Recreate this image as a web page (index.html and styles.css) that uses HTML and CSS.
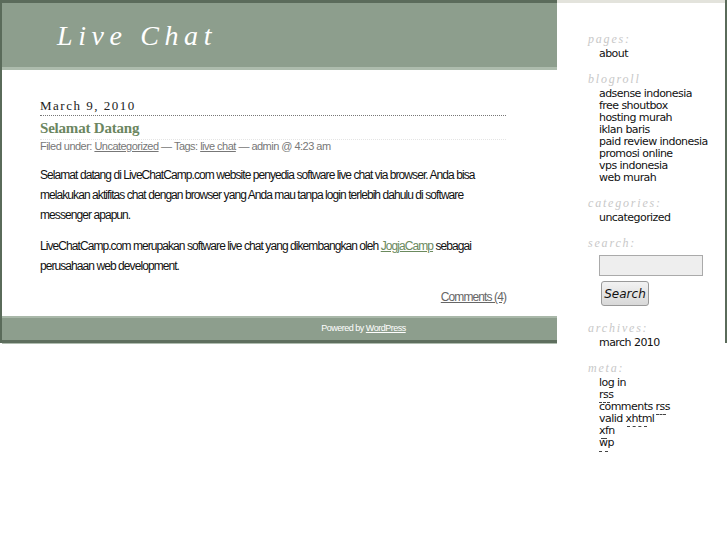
FILE: index.html
```html
<!DOCTYPE html>
<html lang="id">
<head>
<meta charset="utf-8">
<title>Live Chat</title>
<link rel="stylesheet" href="styles.css">
</head>
<body>
<div class="wrap">
  <div class="header"><h1 class="site-title">Live Chat</h1></div>
  <div class="content">
    <h2 class="date">March 9, 2010</h2>
    <h3 class="post-title">Selamat Datang</h3>
    <div class="meta">Filed under: <a href="#">Uncategorized</a> — Tags: <a href="#">live chat</a> — admin @ 4:23 am</div>
    <p class="text">Selamat datang di LiveChatCamp.com website penyedia software live chat via browser. Anda bisa melakukan aktifitas chat dengan browser yang Anda mau tanpa login terlebih dahulu di software messenger apapun.</p>
    <p class="text">LiveChatCamp.com merupakan software live chat yang dikembangkan oleh <a class="green" href="#">JogjaCamp</a> sebagai perusahaan web development.</p>
    <div class="feedback"><a href="#">Comments (4)</a></div>
  </div>
  <div class="footer">Powered by <a href="#">WordPress</a></div>

  <div class="sidebar">
    <h4 class="side-h">pages:</h4>
    <ul class="side-list"><li>about</li></ul>
    <h4 class="side-h">blogroll</h4>
    <ul class="side-list">
      <li>adsense indonesia</li>
      <li>free shoutbox</li>
      <li>hosting murah</li>
      <li>iklan baris</li>
      <li>paid review indonesia</li>
      <li>promosi online</li>
      <li>vps indonesia</li>
      <li>web murah</li>
    </ul>
    <h4 class="side-h">categories:</h4>
    <ul class="side-list"><li>uncategorized</li></ul>
    <h4 class="side-h">search:</h4>
    <form class="search">
      <input class="search-input" type="text">
      <button class="search-btn" type="button">Search</button>
    </form>
    <h4 class="side-h">archives:</h4>
    <ul class="side-list"><li>march 2010</li></ul>
    <h4 class="side-h">meta:</h4>
    <ul class="side-list">
      <li>log in</li>
      <li>rss</li>
      <li><span class="dash d0"></span>comments rss</li>
      <li>valid xhtml<span class="dash d1"></span></li>
      <li>xfn<span class="dash d2"></span></li>
      <li><span class="dash d3"></span>wp</li>
      <li class="cut"><span class="dash d4"></span></li>
    </ul>
  </div>
</div>
</body>
</html>
```

FILE: styles.css
```css
* { box-sizing: border-box; }
html, body { min-height: 545px; }
body { margin: 0; background: #fff; font-family: "Liberation Sans", Arial, sans-serif; color: #111; }
.wrap {
  position: relative;
  width: 727px;
  border-left: 2px solid #5a6b5a;
  border-right: 2px solid #5a6b5a;
}
.header {
  height: 70px;
  background: #8d9e8d;
  border-top: 3px solid #5b6b5b;
  border-bottom: 3px solid #adbcad;
  padding: 16px 0 0 55px;
}
.site-title {
  margin: 0;
  font-family: "Liberation Serif", "Times New Roman", serif;
  font-style: italic;
  font-weight: normal;
  font-size: 28px;
  line-height: 34px;
  letter-spacing: 5.6px;
  color: #fff;
}
.content { padding: 28px 219px 12px 38px; }
.date {
  margin: 0;
  font-family: "Liberation Serif", serif;
  font-weight: normal;
  font-size: 13px;
  line-height: 16px;
  letter-spacing: 1.5px;
  color: #222;
  padding-bottom: 1px;
  border-bottom: 1px dotted #777;
}
.post-title {
  margin: 3px 0 0;
  font-family: "Liberation Serif", serif;
  font-weight: bold;
  font-size: 15px;
  line-height: 18px;
  letter-spacing: -0.2px;
  color: #6b8660;
  padding-bottom: 2px;
  border-bottom: 1px dotted #e4e4e4;
}
.meta {
  font-size: 11px;
  line-height: 13px;
  letter-spacing: -0.52px;
  color: #777;
}
.meta a { color: #777; }
.text {
  margin: 12px 0 0;
  font-size: 12px;
  line-height: 20px;
  letter-spacing: -0.93px;
  color: #111;
}
.text + .text { margin-top: 11px; }
.green { color: #6b8a5e; }
.feedback {
  margin-top: 14px;
  text-align: right;
  font-size: 12px;
  line-height: 14px;
  letter-spacing: -0.9px;
}
.feedback a { color: #666; }
.footer {
  height: 27px;
  background: #8d9e8d;
  border-top: 2px solid #a9b8a9;
  border-bottom: 3px solid #5e6e5e;
  box-shadow: 0 1px 0 #b0bdb0;
  text-align: center;
  font-size: 9px;
  line-height: 20px;
  letter-spacing: -0.5px;
  color: #fff;
}
.footer a { color: #fff; }
.sidebar {
  position: absolute;
  top: 0;
  right: 0;
  width: 168px;
  height: 455px;
  overflow: hidden;
  background: #fff;
  border-top: 3px solid #e3e3dc;
  padding: 29px 0 0 31px;
}
.side-h {
  margin: 0;
  font-family: "Liberation Serif", serif;
  font-style: italic;
  font-weight: normal;
  font-size: 12px;
  line-height: 14px;
  letter-spacing: 1.8px;
  color: #c8c8c8;
}
.side-list {
  list-style: none;
  margin: 2px 0 12px;
  padding: 0 0 0 11px;
  font-family: "DejaVu Sans", sans-serif;
  font-size: 11px;
  line-height: 12px;
  letter-spacing: -0.55px;
  color: #111;
}
.side-list li { position: relative; height: 12px; }
.dash {
  position: absolute;
  border-top: 1px dashed #444;
  height: 0;
}
.d0 { left: 0; top: 1px; width: 11px; }
.d1 { left: 57px; top: 1px; width: 10px; }
.d2 { left: 28px; top: 1px; width: 20px; }
.d3 { left: 2px; top: 1px; width: 6px; }
.d4 { left: 0; top: 2px; width: 9px; }
.search { display: flex; flex-direction: column; align-items: flex-start; padding: 5px 0 15px 11px; }
.search-input {
  width: 104px;
  height: 21px;
  margin: 0;
  background: #eee;
  border: 1px solid #aaa;
}
.search-btn {
  margin: 5px 0 0 2px;
  width: 48px;
  height: 25px;
  padding: 0;
  font-family: "DejaVu Sans", sans-serif;
  font-style: italic;
  font-size: 12px;
  color: #111;
  background: linear-gradient(#f2f2f2, #d8d8d8);
  border: 1px solid #999;
  border-radius: 3px;
}
```
